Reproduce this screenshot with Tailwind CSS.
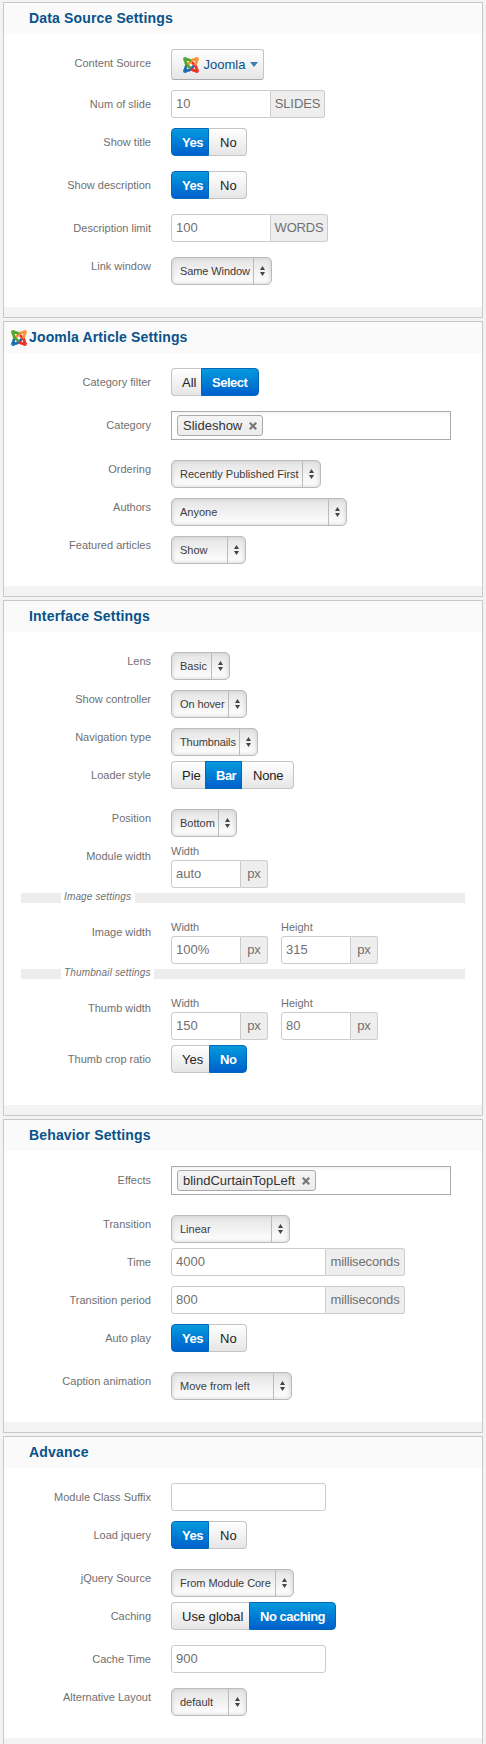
<!DOCTYPE html>
<html lang="en">
<head>
<meta charset="utf-8">
<title>Slideshow module settings</title>
<script src="https://cdn.jsdelivr.net/npm/@tailwindcss/browser@4"></script>
</head>
<body class="bg-[#f3f3f3] font-['Liberation_Sans',Arial,sans-serif] text-[11px] text-[#707070]">
<svg class="hidden">
  <symbol id="joomla" viewBox="0 0 32 32">
    <g fill="none" stroke-width="5.4">
      <g stroke="#1a6fb5" fill="#1a6fb5"><path fill="none" d="M5 27C4 21 5 19 8.500 16M5 27C11 28 14 26 16.500 23.500L22 17.500"/><circle cx="4.500" cy="27.500" r="1.700"/></g>
      <g stroke="#ee3224" fill="#ee3224"><path fill="none" d="M27 27C21 28 19 27 16 23.500M27 27C28 21 26 18 23.500 15.500L17.500 10"/><circle cx="27.500" cy="27.500" r="1.700"/></g>
      <g stroke="#f9943b" fill="#f9943b"><path fill="none" d="M27 5C28 11 27 13 23.500 16M27 5C21 4 18 6 15.500 8.500L10 14.500"/><circle cx="27.500" cy="4.500" r="1.700"/></g>
      <g stroke="#55a62f" fill="#55a62f"><path fill="none" d="M5 5C11 4 13 5 16 8.500M5 5C4 11 6 14 8.500 16.500L14.500 22"/><circle cx="4.500" cy="4.500" r="1.700"/></g>
    </g>
  </symbol>
  <symbol id="updown" viewBox="0 0 5 10"><path fill="#444" d="M2.500 0 5 4H0zM2.500 10 0 6h5z"/></symbol>
  <symbol id="close" viewBox="0 0 8 8"><path stroke="#777" stroke-width="2.200" d="M.8.800l6.400 6.400M7.200.800.800 7.200"/></symbol>
</svg>
<main class="ml-[3px] flex w-[480px] flex-col gap-[3px] pt-[2px]">

  <section class="border border-[#c8c8c8] bg-white">
    <h2 class="h-[31px] bg-[#fafafa] pl-[25px] text-[14px] leading-[30px] font-bold tracking-[0.15px] text-[#08528a]">Data Source Settings</h2>
    <div class="flex flex-col pb-[22px]">
      <div class="mt-[15px] flex h-[31px] gap-5"><label class="w-[147px] text-right leading-[29px]">Content Source</label>
        <button class="flex w-[93px] items-center rounded-[3px] border border-[#c4c4c4] border-b-[#aaa] bg-linear-to-b from-white to-[#e6e6e6] pl-[11px] text-[13px] text-[#08528a]"><svg class="h-4 w-4"><use href="#joomla"/></svg><span class="ml-1 w-[43px]">Joomla</span><svg class="ml-1 h-[5px] w-2" viewBox="0 0 8 5"><path fill="#3a7fae" d="M0 0h8L4 5z"/></svg></button></div>
      <div class="mt-[10px] flex h-7 gap-5"><label class="w-[147px] text-right leading-[29px]">Num of slide</label>
        <div class="flex text-[13px] leading-[26px]"><div class="w-[100px] rounded-l-[3px] border border-[#ccc] pl-1">10</div><div class="w-[54px] rounded-r-[3px] border border-l-0 border-[#ccc] bg-[#eee] text-center tracking-[-0.1px]">SLIDES</div></div></div>
      <div class="mt-[10px] flex h-7 gap-5"><label class="w-[147px] text-right leading-[29px]">Show title</label>
        <div class="flex text-[13px] leading-[25px] text-[#222]"><button class="w-[38px] rounded-l-[4px] border border-[#0068b8] bg-linear-to-b from-[#0a9adc] to-[#005fcc] pl-[10px] text-left font-bold tracking-[-0.5px] text-white">Yes</button><button class="w-[38px] rounded-r-[4px] border border-l-0 border-[#c4c4c4] bg-linear-to-b from-white to-[#e6e6e6] pl-[11px] text-left">No</button></div></div>
      <div class="mt-[15px] flex h-7 gap-5"><label class="w-[147px] text-right leading-[29px]">Show description</label>
        <div class="flex text-[13px] leading-[25px] text-[#222]"><button class="w-[38px] rounded-l-[4px] border border-[#0068b8] bg-linear-to-b from-[#0a9adc] to-[#005fcc] pl-[10px] text-left font-bold tracking-[-0.5px] text-white">Yes</button><button class="w-[38px] rounded-r-[4px] border border-l-0 border-[#c4c4c4] bg-linear-to-b from-white to-[#e6e6e6] pl-[11px] text-left">No</button></div></div>
      <div class="mt-[15px] flex h-7 gap-5"><label class="w-[147px] text-right leading-[29px]">Description limit</label>
        <div class="flex text-[13px] leading-[26px]"><div class="w-[100px] rounded-l-[3px] border border-[#ccc] pl-1">100</div><div class="w-[57px] rounded-r-[3px] border border-l-0 border-[#ccc] bg-[#eee] text-center tracking-[-0.2px]">WORDS</div></div></div>
      <div class="mt-[15px] flex h-7 gap-5"><label class="w-[147px] text-right leading-[19px]">Link window</label>
        <div class="flex w-[101px] rounded-[5px] border border-[#bbb] bg-linear-to-b from-[#e4e4e4] to-white leading-[27px] text-[#3c3c3c] inset-shadow-[0_0_4px_#ccc]"><span class="flex-1 pl-2 tracking-[-0.1px] whitespace-nowrap">Same Window</span><span class="flex w-[18px] items-center justify-center border-l border-[#bbb]"><svg class="h-[10px] w-[5px]"><use href="#updown"/></svg></span></div></div>
    </div>
    <div class="h-[10px] bg-[#f3f3f3]"></div>
  </section>

  <section class="border border-[#c8c8c8] bg-white">
    <h2 class="flex h-[31px] items-center gap-[2px] bg-[#fafafa] pl-[7px] text-[14px] leading-[30px] font-bold tracking-[0.15px] text-[#08528a]"><svg class="h-4 w-4"><use href="#joomla"/></svg><span class="pb-px">Joomla Article Settings</span></h2>
    <div class="flex flex-col pb-[22px]">
      <div class="mt-[15px] flex h-7 gap-5"><label class="w-[147px] text-right leading-[29px]">Category filter</label>
        <div class="flex text-[13px] leading-[25px] text-[#222]"><button class="w-[30px] rounded-l-[4px] border border-r-0 border-[#c4c4c4] bg-linear-to-b from-white to-[#e6e6e6] pl-[10px] text-left">All</button><button class="w-[58px] rounded-r-[4px] border border-[#0068b8] bg-linear-to-b from-[#0a9adc] to-[#005fcc] pl-[10px] text-left font-bold tracking-[-0.5px] text-white">Select</button></div></div>
      <div class="mt-[15px] flex h-[29px] gap-5"><label class="w-[147px] text-right leading-[29px]">Category</label>
        <div class="w-[280px] border border-[#aaa] bg-linear-to-b from-[#f4f4f4] to-white to-15% px-[5px] pt-[3px]"><span class="flex h-[21px] w-[86px] items-center justify-between rounded-[3px] border border-[#aaa] bg-linear-to-b from-[#f4f4f4] to-[#ececec] pr-[5px] pl-[5px] text-[13px] text-[#333]">Slideshow<svg class="h-2 w-2"><use href="#close"/></svg></span></div></div>
      <div class="mt-[20px] flex h-7 gap-5"><label class="w-[147px] text-right leading-[19px]">Ordering</label>
        <div class="flex w-[150px] rounded-[5px] border border-[#bbb] bg-linear-to-b from-[#e4e4e4] to-white leading-[27px] text-[#3c3c3c] inset-shadow-[0_0_4px_#ccc]"><span class="flex-1 pl-2 whitespace-nowrap">Recently Published First</span><span class="flex w-[18px] items-center justify-center border-l border-[#bbb]"><svg class="h-[10px] w-[5px]"><use href="#updown"/></svg></span></div></div>
      <div class="mt-[10px] flex h-7 gap-5"><label class="w-[147px] text-right leading-[19px]">Authors</label>
        <div class="flex w-[176px] rounded-[5px] border border-[#bbb] bg-linear-to-b from-[#e4e4e4] to-white leading-[27px] text-[#3c3c3c] inset-shadow-[0_0_4px_#ccc]"><span class="flex-1 pl-2 whitespace-nowrap">Anyone</span><span class="flex w-[18px] items-center justify-center border-l border-[#bbb]"><svg class="h-[10px] w-[5px]"><use href="#updown"/></svg></span></div></div>
      <div class="mt-[10px] flex h-7 gap-5"><label class="w-[147px] text-right leading-[19px]">Featured articles</label>
        <div class="flex w-[75px] rounded-[5px] border border-[#bbb] bg-linear-to-b from-[#e4e4e4] to-white leading-[27px] text-[#3c3c3c] inset-shadow-[0_0_4px_#ccc]"><span class="flex-1 pl-2 whitespace-nowrap">Show</span><span class="flex w-[18px] items-center justify-center border-l border-[#bbb]"><svg class="h-[10px] w-[5px]"><use href="#updown"/></svg></span></div></div>
    </div>
    <div class="h-[10px] bg-[#f3f3f3]"></div>
  </section>

  <section class="border border-[#c8c8c8] bg-white">
    <h2 class="h-[31px] bg-[#fafafa] pl-[25px] text-[14px] leading-[30px] font-bold tracking-[0.2px] text-[#08528a]">Interface Settings</h2>
    <div class="flex flex-col pb-[32px]">
      <div class="mt-[20px] flex h-7 gap-5"><label class="w-[147px] text-right leading-[19px]">Lens</label>
        <div class="flex w-[59px] rounded-[5px] border border-[#bbb] bg-linear-to-b from-[#e4e4e4] to-white leading-[27px] text-[#3c3c3c] inset-shadow-[0_0_4px_#ccc]"><span class="flex-1 pl-2 whitespace-nowrap">Basic</span><span class="flex w-[18px] items-center justify-center border-l border-[#bbb]"><svg class="h-[10px] w-[5px]"><use href="#updown"/></svg></span></div></div>
      <div class="mt-[10px] flex h-7 gap-5"><label class="w-[147px] text-right leading-[19px]">Show controller</label>
        <div class="flex w-[76px] rounded-[5px] border border-[#bbb] bg-linear-to-b from-[#e4e4e4] to-white leading-[27px] text-[#3c3c3c] inset-shadow-[0_0_4px_#ccc]"><span class="flex-1 pl-2 tracking-[-0.1px] whitespace-nowrap">On hover</span><span class="flex w-[18px] items-center justify-center border-l border-[#bbb]"><svg class="h-[10px] w-[5px]"><use href="#updown"/></svg></span></div></div>
      <div class="mt-[10px] flex h-7 gap-5"><label class="w-[147px] text-right leading-[19px]">Navigation type</label>
        <div class="flex w-[87px] rounded-[5px] border border-[#bbb] bg-linear-to-b from-[#e4e4e4] to-white leading-[27px] text-[#3c3c3c] inset-shadow-[0_0_4px_#ccc]"><span class="flex-1 pl-2 tracking-[-0.1px] whitespace-nowrap">Thumbnails</span><span class="flex w-[18px] items-center justify-center border-l border-[#bbb]"><svg class="h-[10px] w-[5px]"><use href="#updown"/></svg></span></div></div>
      <div class="mt-[5px] flex h-7 gap-5"><label class="w-[147px] text-right leading-[29px]">Loader style</label>
        <div class="flex text-[13px] leading-[25px] text-[#222]"><button class="w-[34px] rounded-l-[4px] border border-r-0 border-[#c4c4c4] bg-linear-to-b from-white to-[#e6e6e6] pl-[10px] text-left">Pie</button><button class="w-[37px] border border-[#0068b8] bg-linear-to-b from-[#0a9adc] to-[#005fcc] pl-[10px] text-left font-bold tracking-[-0.5px] text-white">Bar</button><button class="w-[52px] rounded-r-[4px] border border-l-0 border-[#c4c4c4] bg-linear-to-b from-white to-[#e6e6e6] pl-[11px] text-left tracking-[-0.2px]">None</button></div></div>
      <div class="mt-[20px] flex h-7 gap-5"><label class="w-[147px] text-right leading-[19px]">Position</label>
        <div class="flex w-[66px] rounded-[5px] border border-[#bbb] bg-linear-to-b from-[#e4e4e4] to-white leading-[27px] text-[#3c3c3c] inset-shadow-[0_0_4px_#ccc]"><span class="flex-1 pl-2 whitespace-nowrap">Bottom</span><span class="flex w-[18px] items-center justify-center border-l border-[#bbb]"><svg class="h-[10px] w-[5px]"><use href="#updown"/></svg></span></div></div>
      <div class="mt-[5px] flex h-[46px] gap-5"><label class="w-[147px] text-right leading-[29px]">Module width</label>
        <div class="leading-[18px]">Width<div class="flex h-7 text-[13px] leading-[26px]"><div class="w-[70px] rounded-l-[3px] border border-[#ccc] pl-1">auto</div><div class="w-[27px] rounded-r-[3px] border border-l-0 border-[#ccc] bg-[#eee] text-center">px</div></div></div></div>
      <div class="mx-[17px] mt-[5px] flex h-[10px] bg-[#ededed] pl-[40px]"><span class="w-[74px] bg-white pl-[3px] text-[10px] leading-[8px] tracking-[0.15px] whitespace-nowrap italic">Image settings</span></div>
      <div class="mt-[15px] flex h-[46px] gap-5"><label class="w-[147px] text-right leading-[29px]">Image width</label>
        <div class="flex gap-[13px] leading-[18px]"><div>Width<div class="flex h-7 text-[13px] leading-[26px]"><div class="w-[70px] rounded-l-[3px] border border-[#ccc] pl-1">100%</div><div class="w-[27px] rounded-r-[3px] border border-l-0 border-[#ccc] bg-[#eee] text-center">px</div></div></div><div>Height<div class="flex h-7 text-[13px] leading-[26px]"><div class="w-[70px] rounded-l-[3px] border border-[#ccc] pl-1">315</div><div class="w-[27px] rounded-r-[3px] border border-l-0 border-[#ccc] bg-[#eee] text-center">px</div></div></div></div></div>
      <div class="mx-[17px] mt-[5px] flex h-[10px] bg-[#ededed] pl-[40px]"><span class="w-[93px] bg-white pl-[3px] text-[10px] leading-[8px] tracking-[0.15px] whitespace-nowrap italic">Thumbnail settings</span></div>
      <div class="mt-[15px] flex h-[46px] gap-5"><label class="w-[147px] text-right leading-[29px]">Thumb width</label>
        <div class="flex gap-[13px] leading-[18px]"><div>Width<div class="flex h-7 text-[13px] leading-[26px]"><div class="w-[70px] rounded-l-[3px] border border-[#ccc] pl-1">150</div><div class="w-[27px] rounded-r-[3px] border border-l-0 border-[#ccc] bg-[#eee] text-center">px</div></div></div><div>Height<div class="flex h-7 text-[13px] leading-[26px]"><div class="w-[70px] rounded-l-[3px] border border-[#ccc] pl-1">80</div><div class="w-[27px] rounded-r-[3px] border border-l-0 border-[#ccc] bg-[#eee] text-center">px</div></div></div></div></div>
      <div class="mt-[5px] flex h-7 gap-5"><label class="w-[147px] text-right leading-[29px]">Thumb crop ratio</label>
        <div class="flex text-[13px] leading-[25px] text-[#222]"><button class="w-[38px] rounded-l-[4px] border border-r-0 border-[#c4c4c4] bg-linear-to-b from-white to-[#e6e6e6] pl-[10px] text-left">Yes</button><button class="w-[38px] rounded-r-[4px] border border-[#0068b8] bg-linear-to-b from-[#0a9adc] to-[#005fcc] pl-[10px] text-left font-bold tracking-[-0.5px] text-white">No</button></div></div>
    </div>
    <div class="h-[10px] bg-[#f3f3f3]"></div>
  </section>

  <section class="border border-[#c8c8c8] bg-white">
    <h2 class="h-[31px] bg-[#fafafa] pl-[25px] text-[14px] leading-[30px] font-bold tracking-[0.15px] text-[#08528a]">Behavior Settings</h2>
    <div class="flex flex-col pb-[22px]">
      <div class="mt-[15px] flex h-[29px] gap-5"><label class="w-[147px] text-right leading-[29px]">Effects</label>
        <div class="w-[280px] border border-[#aaa] bg-linear-to-b from-[#f4f4f4] to-white to-15% px-[5px] pt-[3px]"><span class="flex h-[21px] w-[139px] items-center justify-between rounded-[3px] border border-[#aaa] bg-linear-to-b from-[#f4f4f4] to-[#ececec] pr-[5px] pl-[5px] text-[13px] text-[#333]">blindCurtainTopLeft<svg class="h-2 w-2"><use href="#close"/></svg></span></div></div>
      <div class="mt-[20px] flex h-7 gap-5"><label class="w-[147px] text-right leading-[19px]">Transition</label>
        <div class="flex w-[119px] rounded-[5px] border border-[#bbb] bg-linear-to-b from-[#e4e4e4] to-white leading-[27px] text-[#3c3c3c] inset-shadow-[0_0_4px_#ccc]"><span class="flex-1 pl-2 whitespace-nowrap">Linear</span><span class="flex w-[18px] items-center justify-center border-l border-[#bbb]"><svg class="h-[10px] w-[5px]"><use href="#updown"/></svg></span></div></div>
      <div class="mt-[5px] flex h-7 gap-5"><label class="w-[147px] text-right leading-[29px]">Time</label>
        <div class="flex text-[13px] leading-[26px]"><div class="w-[155px] rounded-l-[3px] border border-[#ccc] pl-1">4000</div><div class="w-[79px] rounded-r-[3px] border border-l-0 border-[#ccc] bg-[#eee] text-center tracking-[-0.15px]">milliseconds</div></div></div>
      <div class="mt-[10px] flex h-7 gap-5"><label class="w-[147px] text-right leading-[29px]">Transition period</label>
        <div class="flex text-[13px] leading-[26px]"><div class="w-[155px] rounded-l-[3px] border border-[#ccc] pl-1">800</div><div class="w-[79px] rounded-r-[3px] border border-l-0 border-[#ccc] bg-[#eee] text-center tracking-[-0.15px]">milliseconds</div></div></div>
      <div class="mt-[10px] flex h-7 gap-5"><label class="w-[147px] text-right leading-[29px]">Auto play</label>
        <div class="flex text-[13px] leading-[25px] text-[#222]"><button class="w-[38px] rounded-l-[4px] border border-[#0068b8] bg-linear-to-b from-[#0a9adc] to-[#005fcc] pl-[10px] text-left font-bold tracking-[-0.5px] text-white">Yes</button><button class="w-[38px] rounded-r-[4px] border border-l-0 border-[#c4c4c4] bg-linear-to-b from-white to-[#e6e6e6] pl-[11px] text-left">No</button></div></div>
      <div class="mt-[20px] flex h-7 gap-5"><label class="w-[147px] text-right leading-[19px]">Caption animation</label>
        <div class="flex w-[121px] rounded-[5px] border border-[#bbb] bg-linear-to-b from-[#e4e4e4] to-white leading-[27px] text-[#3c3c3c] inset-shadow-[0_0_4px_#ccc]"><span class="flex-1 pl-2 whitespace-nowrap">Move from left</span><span class="flex w-[18px] items-center justify-center border-l border-[#bbb]"><svg class="h-[10px] w-[5px]"><use href="#updown"/></svg></span></div></div>
    </div>
    <div class="h-[10px] bg-[#f3f3f3]"></div>
  </section>

  <section class="border border-b-0 border-[#c8c8c8] bg-white">
    <h2 class="h-[31px] bg-[#fafafa] pl-[25px] text-[14px] leading-[30px] font-bold tracking-[0.2px] text-[#08528a]">Advance</h2>
    <div class="flex flex-col pb-[22px]">
      <div class="mt-[15px] flex h-7 gap-5"><label class="w-[147px] text-right leading-[29px]">Module Class Suffix</label>
        <div class="w-[155px] rounded-[3px] border border-[#ccc]"></div></div>
      <div class="mt-[10px] flex h-7 gap-5"><label class="w-[147px] text-right leading-[29px]">Load jquery</label>
        <div class="flex text-[13px] leading-[25px] text-[#222]"><button class="w-[38px] rounded-l-[4px] border border-[#0068b8] bg-linear-to-b from-[#0a9adc] to-[#005fcc] pl-[10px] text-left font-bold tracking-[-0.5px] text-white">Yes</button><button class="w-[38px] rounded-r-[4px] border border-l-0 border-[#c4c4c4] bg-linear-to-b from-white to-[#e6e6e6] pl-[11px] text-left">No</button></div></div>
      <div class="mt-[20px] flex h-7 gap-5"><label class="w-[147px] text-right leading-[19px]">jQuery Source</label>
        <div class="flex w-[123px] rounded-[5px] border border-[#bbb] bg-linear-to-b from-[#e4e4e4] to-white leading-[27px] text-[#3c3c3c] inset-shadow-[0_0_4px_#ccc]"><span class="flex-1 pl-2 tracking-[-0.06px] whitespace-nowrap">From Module Core</span><span class="flex w-[18px] items-center justify-center border-l border-[#bbb]"><svg class="h-[10px] w-[5px]"><use href="#updown"/></svg></span></div></div>
      <div class="mt-[5px] flex h-7 gap-5"><label class="w-[147px] text-right leading-[29px]">Caching</label>
        <div class="flex text-[13px] leading-[25px] text-[#222]"><button class="w-[78px] rounded-l-[4px] border border-r-0 border-[#c4c4c4] bg-linear-to-b from-white to-[#e6e6e6] pl-[10px] text-left whitespace-nowrap">Use global</button><button class="w-[87px] rounded-r-[4px] border border-[#0068b8] bg-linear-to-b from-[#0a9adc] to-[#005fcc] pl-[10px] text-left font-bold tracking-[-0.5px] whitespace-nowrap text-white">No caching</button></div></div>
      <div class="mt-[15px] flex h-7 gap-5"><label class="w-[147px] text-right leading-[29px]">Cache Time</label>
        <div class="w-[155px] rounded-[3px] border border-[#ccc] pl-1 text-[13px] leading-[26px]">900</div></div>
      <div class="mt-[15px] flex h-7 gap-5"><label class="w-[147px] text-right leading-[19px]">Alternative Layout</label>
        <div class="flex w-[76px] rounded-[5px] border border-[#bbb] bg-linear-to-b from-[#e4e4e4] to-white leading-[27px] text-[#3c3c3c] inset-shadow-[0_0_4px_#ccc]"><span class="flex-1 pl-2 whitespace-nowrap">default</span><span class="flex w-[18px] items-center justify-center border-l border-[#bbb]"><svg class="h-[10px] w-[5px]"><use href="#updown"/></svg></span></div></div>
    </div>
    <div class="h-[6px] bg-[#f3f3f3]"></div>
  </section>
</main>
</body>
</html>
